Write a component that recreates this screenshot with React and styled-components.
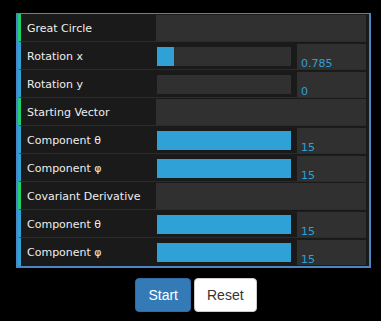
import React from "react";
import styled, { createGlobalStyle } from "styled-components";

const COLORS = {
  page: "#000",
  row: "#1a1a1a",
  divider: "#2c2c2c",
  field: "#303030",
  text: "#eee",
  blue: "#2fa1d6",
  green: "#1ed36f",
  frame: "#4a86c2",
};

const GlobalStyle = createGlobalStyle`
  html, body {
    margin: 0;
    padding: 0;
    background: ${COLORS.page};
  }
  body {
    font-family: "DejaVu Sans", "Liberation Sans", sans-serif;
  }
`;

const Page = styled.div`
  width: 381px;
  height: 321px;
  padding-top: 13px;
  box-sizing: border-box;
`;

const Panel = styled.ul`
  list-style: none;
  margin: 0 0 0 16px;
  padding: 0 3px 0 0;
  width: 355px;
  box-sizing: border-box;
  border: 2px solid ${COLORS.frame};
  border-top-width: 1px;
  background: ${COLORS.row};
`;

const Row = styled.li`
  display: flex;
  align-items: flex-start;
  height: 27px;
  border-bottom: 1px solid ${COLORS.divider};
  border-left: 3px solid ${(p) => (p.$kind === "title" ? COLORS.green : COLORS.blue)};
  background: ${COLORS.row};
  &:last-child {
    border-bottom: 0;
    height: 28px;
  }
`;

const Label = styled.span`
  width: 129px;
  flex: none;
  padding-left: 6px;
  padding-top: 1px;
  line-height: 27px;
  font-size: 11px;
  color: ${COLORS.text};
  white-space: nowrap;
`;

const TextField = styled.div`
  width: 210px;
  height: 26px;
  margin-top: 1px;
  background: ${COLORS.field};
`;

const Slider = styled.div`
  width: 134px;
  height: 19px;
  margin: 5px 0 0 1px;
  background: ${COLORS.field};
`;

const SliderFill = styled.div`
  height: 100%;
  background: ${COLORS.blue};
`;

const NumberBox = styled.div`
  width: 69px;
  height: 25px;
  margin: 2px 0 0 6px;
  box-sizing: border-box;
  padding: 0 0 0 4px;
  display: flex;
  align-items: flex-end;
  background: ${COLORS.field};
  color: ${COLORS.blue};
  font-size: 11px;
  line-height: 10px;
`;

const ButtonBar = styled.div`
  display: flex;
  justify-content: center;
  gap: 3px;
  padding-left: 11px;
  margin-top: 10px;
`;

const Button = styled.button`
  font-family: "Liberation Sans", Arial, sans-serif;
  font-size: 14px;
  line-height: 20px;
  padding: 6px 12px;
  border-radius: 4px;
  border: 1px solid ${(p) => (p.$primary ? "#2e6da4" : "#ccc")};
  background: ${(p) => (p.$primary ? "#337ab7" : "#fff")};
  color: ${(p) => (p.$primary ? "#fff" : "#333")};
  cursor: pointer;
`;

const rows = [
  { kind: "title", label: "Great Circle" },
  { label: "Rotation x", value: "0.785", frac: 0.785 / (2 * Math.PI) },
  { label: "Rotation y", value: "0", frac: 0 },
  { kind: "title", label: "Starting Vector" },
  { label: "Component θ", value: "15", frac: 1 },
  { label: "Component φ", value: "15", frac: 1 },
  { kind: "title", label: "Covariant Derivative" },
  { label: "Component θ", value: "15", frac: 1 },
  { label: "Component φ", value: "15", frac: 1 },
];

const App = () => {
  return (
    <Page>
      <GlobalStyle />
      <Panel>
        {rows.map((r, i) => (
          <Row key={i} $kind={r.kind}>
            <Label>{r.label}</Label>
            {r.kind === "title" ? (
              <TextField />
            ) : (
              <>
                <Slider>
                  <SliderFill style={{ width: `${r.frac * 100}%` }} />
                </Slider>
                <NumberBox>{r.value}</NumberBox>
              </>
            )}
          </Row>
        ))}
      </Panel>
      <ButtonBar>
        <Button $primary>Start</Button>
        <Button>Reset</Button>
      </ButtonBar>
    </Page>
  );
};

export default App;
